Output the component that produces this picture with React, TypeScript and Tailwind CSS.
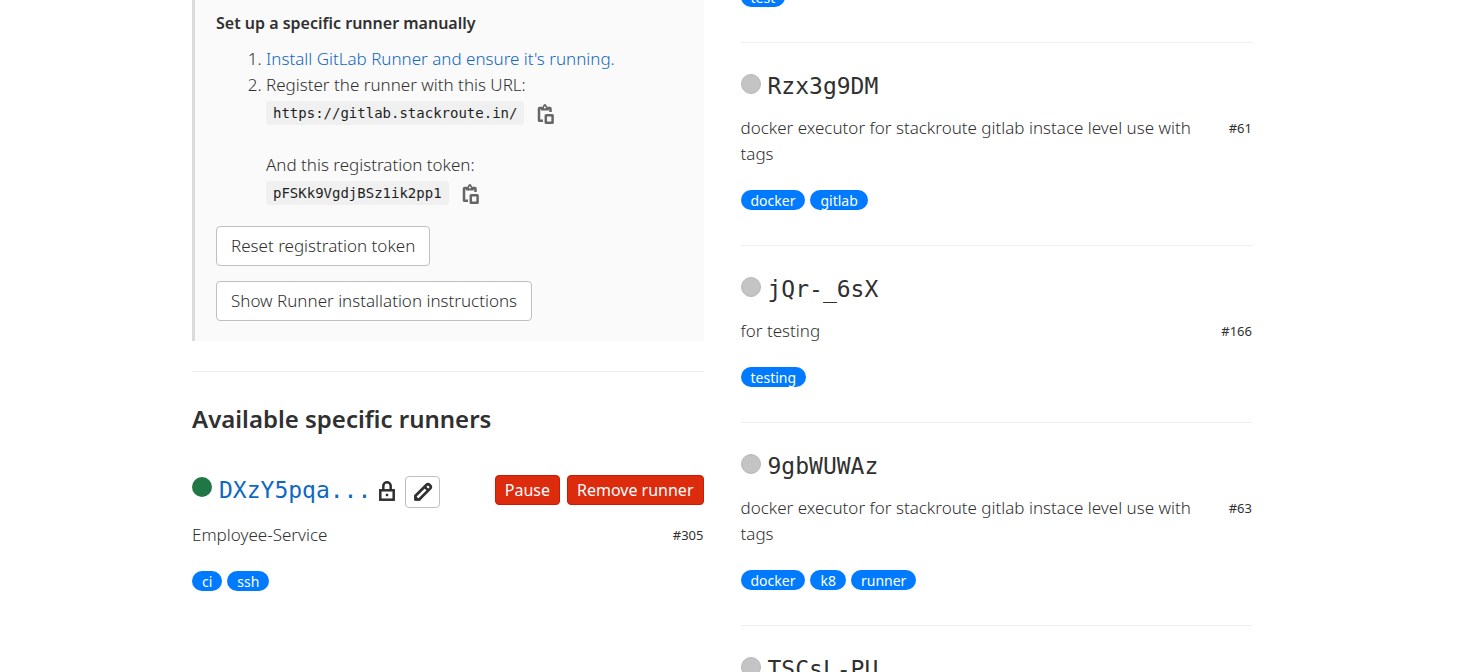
import React from "react";

type Runner = {
  name: string;
  description: string;
  id: string;
  tags: string[];
};

const sharedRunners: Runner[] = [
  {
    name: "Rzx3g9DM",
    description: "docker executor for stackroute gitlab instace level use with tags",
    id: "#61",
    tags: ["docker", "gitlab"],
  },
  { name: "jQr-_6sX", description: "for testing", id: "#166", tags: ["testing"] },
  {
    name: "9gbWUWAz",
    description: "docker executor for stackroute gitlab instace level use with tags",
    id: "#63",
    tags: ["docker", "k8", "runner"],
  },
  { name: "TSCsL-PU", description: "", id: "", tags: [] },
];

function Tags({ tags }: { tags: string[] }) {
  return (
    <div className="flex h-5 gap-[5px]">
      {tags.map((tag) => (
        <span
          key={tag}
          className="rounded-full bg-[#007bff] px-2.5 text-sm leading-[21px] font-normal text-white"
        >
          {tag}
        </span>
      ))}
    </div>
  );
}

function ClipboardIcon() {
  return (
    <svg viewBox="0 0 20 20" className="size-5" fill="none" stroke="#666" aria-hidden="true">
      <path d="M7 16.8H3.6a.6.6 0 0 1-.6-.6V4.700a.6.6 0 0 1 .6-.6h10.300a.6.6 0 0 1 .6.6v3.300" strokeWidth="2.500" />
      <path
        d="M5 6.600V3h1.700C7.200 1.200 7.900 0 8.900 0s1.700 1.200 2.200 3h1.700v3.600Z"
        fill="#666"
        stroke="none"
      />
      <circle cx="8.900" cy="3.500" r="1" fill="#fafafa" stroke="none" />
      <rect x="9.800" y="11.200" width="6.800" height="7.600" rx=".4" strokeWidth="2.500" />
    </svg>
  );
}

function LockIcon() {
  return (
    <svg viewBox="0 0 20 20" className="size-5" fill="none" stroke="#303030" aria-hidden="true">
      <rect x="3.300" y="9.300" width="13.400" height="9.400" strokeWidth="2.500" />
      <path d="M6.300 9V4.900a3.700 3.700 0 0 1 7.400 0V9" strokeWidth="2.500" />
      <rect x="8.800" y="12.800" width="2.400" height="2.400" fill="#303030" stroke="none" />
    </svg>
  );
}

function PencilIcon() {
  return (
    <svg viewBox="0 0 20 20" className="size-5" fill="none" stroke="#303030" aria-hidden="true">
      <path
        d="M2.500 17.500v-3.700L13.600 2.700a1.900 1.900 0 0 1 2.700 0l1 1a1.900 1.900 0 0 1 0 2.700L6.200 17.500Z"
        strokeWidth="2.700"
        strokeLinejoin="round"
      />
      <path d="m11.700 4.800 3.500 3.500" strokeWidth="2.400" />
      <path d="M1.400 12.500v6.100h6.100Z" fill="#303030" stroke="none" />
    </svg>
  );
}

function CopyField({ value, label }: { value: string; label: string }) {
  return (
    <div className="flex items-center gap-3">
      <code className="rounded bg-[#f0f0f0] px-[7px] font-['DejaVu_Sans_Mono',monospace] text-sm leading-6 text-[#1f1f1f]">
        {value}
      </code>
      <button type="button" aria-label={label} className="flex pt-0.5">
        <ClipboardIcon />
      </button>
    </div>
  );
}

const outlineButton =
  "h-10 rounded border border-[#bfbfbf] bg-white px-3.5 whitespace-nowrap";
const dangerButton =
  "h-[30px] rounded border border-[#c91c00] bg-[#dd2b0e] px-[9px] text-base font-normal whitespace-nowrap text-white";

export default function App() {
  return (
    <main className="h-screen overflow-hidden bg-white pr-3.5 font-['Noto_Sans',sans-serif] text-[17px] leading-[26px] font-light text-[#303030]">
      <div className="mx-auto grid max-w-[1060px] grid-cols-2 gap-[37px]">
        <section>
          <div className="border-l-[3px] border-[#dbdbdb] bg-[#fafafa] pt-2.5 pb-5 pl-[21px]">
            <h5 className="text-base leading-[26px] font-semibold">
              Set up a specific runner manually
            </h5>
            <ol className="mt-2.5 list-decimal pl-[50px]">
              <li>
                <a href="#install" className="text-[#1068bf]">
                  Install GitLab Runner and ensure it's running.
                </a>
              </li>
              <li>
                Register the runner with this URL:
                <div className="h-[54px] pt-[3px]">
                  <CopyField value="https://gitlab.stackroute.in/" label="Copy URL" />
                </div>
                And this registration token:
                <div className="pt-[3px]">
                  <CopyField value="pFSKk9VgdjBSz1ik2pp1" label="Copy token" />
                </div>
              </li>
            </ol>
            <div className="mt-[21px] flex flex-col items-start gap-[15px]">
              <button type="button" className={outlineButton}>
                Reset registration token
              </button>
              <button type="button" className={outlineButton}>
                Show Runner installation instructions
              </button>
            </div>
          </div>
          <hr className="mt-[30px] border-[#eee]" />
          <h4 className="mt-[31px] text-2xl leading-8 font-semibold">Available specific runners</h4>
          <div className="mt-[41px] flex h-8 items-center">
            <span className="mb-2.5 size-5 rounded-full bg-[#217645]" />
            <a
              href="#runner"
              className="mb-1 ml-[7px] font-['DejaVu_Sans_Mono',monospace] text-[23px] text-[#1068bf]"
            >
              DXzY5pqa...
            </a>
            <span className="mb-0.5 ml-1.5">
              <LockIcon />
            </span>
            <button
              type="button"
              aria-label="Edit"
              className="ml-2 flex h-8 w-[35px] items-center justify-center rounded border border-[#bfbfbf] bg-white"
            >
              <PencilIcon />
            </button>
            <div className="mb-1 ml-auto flex gap-[7px]">
              <button type="button" className={dangerButton}>
                Pause
              </button>
              <button type="button" className={dangerButton}>
                Remove runner
              </button>
            </div>
          </div>
          <div className="mt-3.5 mb-[23px] flex justify-between">
            <p>Employee-Service</p>
            <small className="text-[13px] font-normal">#305</small>
          </div>
          <Tags tags={["ci", "ssh"]} />
        </section>

        <section>
          <div className="-mt-[13px] pb-[35px]">
            <Tags tags={["test"]} />
          </div>
          <ul>
            {sharedRunners.map((runner) => (
              <li key={runner.name} className="border-t border-[#eee] pt-[26px] pb-[35px]">
                <div className="flex h-[34px] items-center gap-[7px]">
                  <span className="mb-1 size-5 rounded-full border border-[#b8b8b8] bg-[#c4c4c4]" />
                  <span className="font-['DejaVu_Sans_Mono',monospace] text-[23px]">
                    {runner.name}
                  </span>
                </div>
                <div className="mt-3 mb-[23px] flex justify-between gap-5">
                  <p>{runner.description}</p>
                  <small className="text-[13px] font-normal">{runner.id}</small>
                </div>
                <Tags tags={runner.tags} />
              </li>
            ))}
          </ul>
        </section>
      </div>
    </main>
  );
}
